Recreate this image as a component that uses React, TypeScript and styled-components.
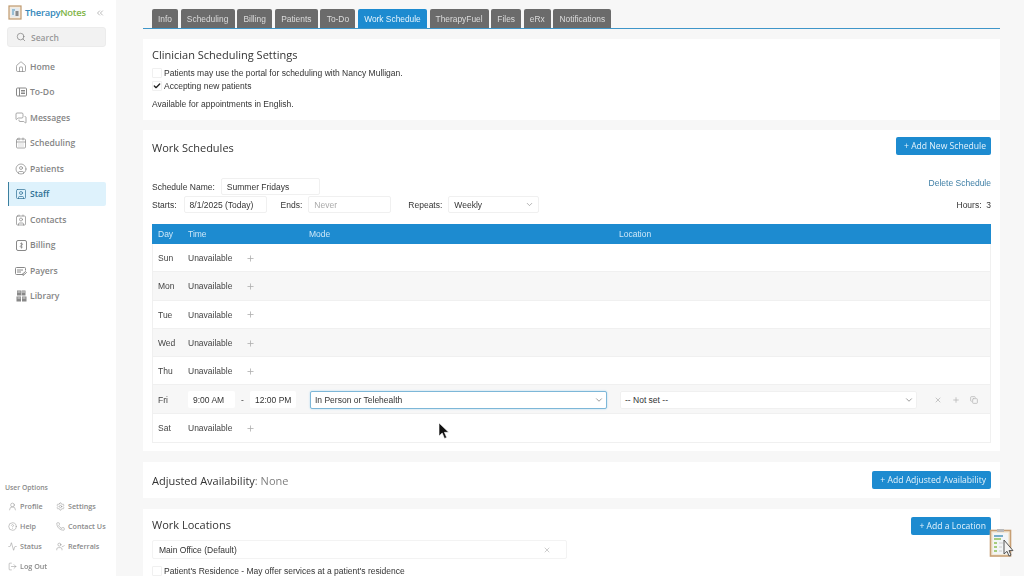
import * as React from "react";
import styled, { createGlobalStyle } from "styled-components";
import {
  House, MessagesSquare, CalendarDays, CircleUser, SquareUser, Contact, Search,
  ChevronsLeft, ChevronDown, Plus, X, Check, Copy, UserRound, Settings, CircleHelp,
  Phone, Activity, UserCheck, LogOut,
} from "lucide-react";

const GlobalStyle = createGlobalStyle`
  html, body { margin: 0; padding: 0; height: 100%; overflow: hidden; }
  body { font-family: "Liberation Sans", Arial, sans-serif; color: #2b2b2b; background: #f7f7f7; }
`;

const Page = styled.div`
  display: flex;
  width: 1024px;
  height: 576px;
  overflow: hidden;
  position: relative;
  filter: blur(0.35px);
`;

/* sidebar */
const Sidebar = styled.aside`
  width: 116px;
  flex: none;
  height: 576px;
  background: #fff;
  display: flex;
  flex-direction: column;
  font-family: "Open Sans", sans-serif;
  color: #777;
`;
const LogoRow = styled.div`
  display: flex;
  align-items: center;
  height: 27px;
  padding: 0 0 2px 8px;
  box-sizing: border-box;
`;
const LogoText = styled.span`
  font-size: 9.4px;
  font-weight: 600;
  letter-spacing: -0.25px;
  margin-left: 3px;
  color: #3488bb;
  b { font-weight: 600; color: #7fb446; }
`;
const Collapse = styled.span`
  margin-left: 9px;
  display: flex;
  color: #888;
`;
const SearchBox = styled.div`
  margin-left: 7px;
  width: 99px;
  height: 20px;
  box-sizing: border-box;
  background: #f2f2f2;
  border-radius: 3px;
  border: 1px solid #ececec;
  display: flex;
  align-items: center;
  gap: 5px;
  padding-left: 8px;
  font-size: 8.5px;
  font-weight: 600;
  color: #999;
`;
const Nav = styled.nav`
  margin-top: 7.5px;
  display: flex;
  flex-direction: column;
  gap: 1.5px;
`;
const NavItem = styled.div<{ $active?: boolean }>`
  height: 24px;
  width: 98px;
  margin-left: 8px;
  box-sizing: border-box;
  display: flex;
  align-items: center;
  gap: 3px;
  padding-left: 6px;
  font-size: 8.6px;
  font-weight: 600;
  border-left: 1px solid ${p => (p.$active ? "#3b7f9f" : "transparent")};
  background: ${p => (p.$active ? "#def2fc" : "transparent")};
  color: ${p => (p.$active ? "#2d6f93" : "#858585")};
  border-radius: 0 2px 2px 0;
`;
const NavIcon = styled.span`
  width: 12px;
  height: 12px;
  display: flex;
  align-items: center;
  justify-content: center;
  flex: none;
`;
const UserOptions = styled.div`
  margin-top: auto;
  padding: 0 0 0 5px;
  font-size: 6.8px;
  font-weight: 600;
  color: #8a8a8a;
`;
const OptionsTitle = styled.div`
  height: 11px;
  line-height: 11px;
  margin-bottom: 3px;
`;
const OptionsGrid = styled.div`
  display: grid;
  grid-template-columns: 48px 60px;
  grid-auto-rows: 20px;
  padding-left: 3px;
`;
const Option = styled.div`
  display: flex;
  align-items: center;
  gap: 3px;
  font-size: 7.2px;
`;

/* main column */
const Main = styled.main`
  flex: 1;
  min-width: 0;
  padding: 9px 24px 0 27px;
  font-size: 8.5px;
`;
const Tabs = styled.div`
  display: flex;
  gap: 2.6px;
  padding-left: 9px;
  height: 19px;
  border-bottom: 1px solid #3f96c9;
`;
const Tab = styled.div<{ $active?: boolean; $w: number }>`
  width: ${p => p.$w}px;
  box-sizing: border-box;
  display: flex;
  align-items: center;
  justify-content: center;
  font-size: 8.4px;
  border-radius: 2px 2px 0 0;
  background: ${p => (p.$active ? "#1d8bd0" : "#6b6b6b")};
  color: ${p => (p.$active ? "#e6f4fd" : "#dcdcdc")};
`;
const Card = styled.section<{ $h: number; $mt: number }>`
  background: #fff;
  height: ${p => p.$h}px;
  margin-top: ${p => p.$mt}px;
  box-sizing: border-box;
  padding: 0 9px;
  overflow: hidden;
`;
const CardHead = styled.div<{ $h: number; $pt?: number }>`
  display: flex;
  align-items: center;
  justify-content: space-between;
  box-sizing: border-box;
  height: ${p => p.$h}px;
  padding-top: ${p => p.$pt ?? 0}px;
`;
const Title = styled.h2<{ $mt?: number }>`
  margin: ${p => p.$mt ?? 0}px 0 0;
  font-family: "Open Sans", sans-serif;
  font-weight: 400;
  font-size: 11px;
  color: #333;
  span { color: #808080; }
`;
const BlueButton = styled.button<{ $mt?: number }>`
  height: 18px;
  margin-top: ${p => p.$mt ?? 0}px;
  border: 0;
  border-radius: 2px;
  background: #1d8bd0;
  color: #e4f3fc;
  padding: 0 5px 0 8px;
  font-family: "Open Sans", sans-serif;
  font-size: 8.6px;
  white-space: nowrap;
`;
const CheckRow = styled.div<{ $mt?: number }>`
  display: flex;
  align-items: center;
  height: 12.5px;
  margin-top: ${p => p.$mt ?? 0}px;
  gap: 2px;
  color: #333;
`;
const CheckBox = styled.span`
  width: 8px;
  height: 8px;
  flex: none;
  display: flex;
  align-items: center;
  justify-content: center;
  border: 1px solid #f0f0f0;
  border-radius: 1px;
  color: #222;
`;
const Note = styled.div`
  margin-top: 6px;
  color: #333;
  height: 12px;
  line-height: 12px;
`;
const FormRow = styled.div<{ $mt: number }>`
  display: flex;
  align-items: center;
  height: 17px;
  margin-top: ${p => p.$mt}px;
  color: #333;
`;
const FieldLabel = styled.span<{ $ml: number }>`
  margin-left: ${p => p.$ml}px;
`;
const Field = styled.div<{ $w: number; $ml: number; $muted?: boolean }>`
  width: ${p => p.$w}px;
  height: 17px;
  margin-left: ${p => p.$ml}px;
  box-sizing: border-box;
  border: 1px solid #f0f0f0;
  border-radius: 2px;
  display: flex;
  align-items: center;
  justify-content: space-between;
  padding: 0 4px 0 5px;
  background: #fff;
  color: ${p => (p.$muted ? "#aaa" : "#333")};
`;
const EndText = styled.div<{ $link?: boolean }>`
  margin-left: auto;
  margin-bottom: ${p => (p.$link ? 8 : 0)}px;
  color: ${p => (p.$link ? "#3f7fa6" : "#333")};
`;
const TableHead = styled.div`
  display: grid;
  grid-template-columns: 30px 121px 310px 1fr;
  align-items: center;
  height: 20px;
  margin-top: 11px;
  padding-left: 6px;
  background: #1d8bd0;
  color: #cfe8f8;
`;
const Rows = styled.div`
  border: 1px solid #f0f0f0;
  border-top: 0;
`;
const Row = styled.div<{ $shade?: boolean }>`
  display: flex;
  align-items: center;
  height: 28.3px;
  box-sizing: border-box;
  padding: 1px 0 0 5px;
  border-bottom: 1px solid #f0f0f0;
  background: ${p => (p.$shade ? "#f7f7f7" : "#fff")};
  color: #444;
  &:last-child { border-bottom: 0; }
`;
const DayCell = styled.div`
  width: 30px;
  flex: none;
`;
const AddIcon = styled.span`
  margin-left: 13.5px;
  display: flex;
  color: #b0b0b0;
`;
const TimeBox = styled.div<{ $w: number }>`
  width: ${p => p.$w}px;
  height: 17px;
  box-sizing: border-box;
  padding-left: 5px;
  background: #fff;
  border-radius: 2px;
  display: flex;
  align-items: center;
  color: #333;
`;
const Dash = styled.span`
  width: 15px;
  text-align: center;
`;
const SelectBox = styled.div<{ $w: number; $ml: number; $focus?: boolean }>`
  width: ${p => p.$w}px;
  height: 18px;
  margin-left: ${p => p.$ml}px;
  box-sizing: border-box;
  background: #fff;
  border: 1px solid ${p => (p.$focus ? "#7db7d8" : "#f0f0f0")};
  box-shadow: ${p => (p.$focus ? "0 0 2px #a9d6ef" : "none")};
  border-radius: 2px;
  display: flex;
  align-items: center;
  justify-content: space-between;
  padding: 0 2px 0 4px;
  color: #333;
`;
const RowTools = styled.div`
  display: flex;
  align-items: center;
  gap: 10px;
  margin-left: 17px;
  color: #b8b8b8;
`;
const LocationRow = styled.div`
  width: 415px;
  height: 19px;
  box-sizing: border-box;
  border: 1px solid #f3f3f3;
  border-radius: 2px;
  display: flex;
  align-items: center;
  justify-content: space-between;
  padding: 0 15px 0 6px;
  color: #333;
`;
const Cursor = styled.svg`
  position: absolute;
  left: 438px;
  top: 422px;
`;
const ClipWrap = styled.div`
  position: absolute;
  left: 989px;
  top: 529px;
`;

const Logo = () => (
  <svg width="14" height="15" viewBox="0 0 14 15">
    <rect x="1" y="1" width="12" height="13" fill="#f3ece0" stroke="#c09a6e" strokeWidth="1.2" />
    <rect x="3" y="3" width="8" height="9" fill="#e6ebef" />
    <path d="M4 5h3M4 7h2M4 9h2" stroke="#4d93bb" strokeWidth="1" />
    <rect x="7.5" y="6" width="3" height="5" fill="#8a8a8a" />
  </svg>
);

const TodoIcon = () => (
  <svg width="11" height="10" viewBox="0 0 11 10" fill="none" stroke="#888" strokeWidth="1">
    <rect x=".5" y="1" width="10" height="8" rx="1" />
    <path d="M3.5 1v8M5 3.5h4M5 5h4M5 6.5h4" />
  </svg>
);
const BillingIcon = () => (
  <svg width="11" height="11" viewBox="0 0 11 11" fill="none" stroke="#888" strokeWidth="1">
    <rect x=".5" y=".5" width="10" height="10" rx="1.5" />
    <path d="M5.500 2.500v6M4.200 3.800c1-.8 2.400-.4 2.400.5 0 1.400-2.400.8-2.400 2.200 0 .9 1.500 1.200 2.500.5" strokeWidth=".8" />
  </svg>
);
const PayersIcon = () => (
  <svg width="12" height="10" viewBox="0 0 12 10" fill="none" stroke="#888" strokeWidth="1">
    <path d="M8.500 8.500H1.500a1 1 0 0 1-1-1v-5a1 1 0 0 1 1-1h8a1 1 0 0 1 1 1v2" />
    <path d="M2 4h6M2 6h4M7 8.500l3.500-3 1 1L8 9.500z" />
  </svg>
);
const LibraryIcon = () => (
  <svg width="11" height="12" viewBox="0 0 11 12" fill="#888">
    <rect x="1" y=".5" width="4" height="5" />
    <rect x="5.500" y=".5" width="4" height="5" />
    <rect x=".5" y="6.500" width="4.500" height="5" />
    <rect x="6" y="6.500" width="4.500" height="5" />
    <path d="M1.500 2h3M6 2h3M1.500 8h3M6.500 8h3" stroke="#fff" strokeWidth=".7" />
  </svg>
);

const TinyClipboard = () => (
  <svg width="26" height="28" viewBox="0 0 26 28">
    <rect x="1.500" y="1.500" width="20" height="25.500" fill="#f2ead9" stroke="#c79f74" strokeWidth="1.6" />
    <rect x="4" y="4" width="15" height="21" fill="#f2f5f7" />
    <rect x="8" y="0" width="7" height="3" fill="#b9b9b9" />
    <path d="M5 7h9" stroke="#4d93bb" strokeWidth="1.500" />
    <path d="M5 10h7" stroke="#8fbf56" strokeWidth="1.500" />
    <path d="M5 14h3M5 18h3M5 22h3" stroke="#8fbf56" strokeWidth="1.400" />
    <path d="M10 14h4M10 18h3M10 22h3" stroke="#ccc" strokeWidth="1" />
    <path d="M15 11v14l3-2.700 2 4.700 2-.9-2-4.500h4z" fill="#f4f4f4" stroke="#555" strokeWidth="1" />
  </svg>
);

const icon = { size: 12, strokeWidth: 1.4 };
const navItems: { label: string; node: React.ReactNode; active?: boolean }[] = [
  { label: "Home", node: <House {...icon} /> },
  { label: "To-Do", node: <TodoIcon /> },
  { label: "Messages", node: <MessagesSquare {...icon} /> },
  { label: "Scheduling", node: <CalendarDays {...icon} /> },
  { label: "Patients", node: <CircleUser {...icon} /> },
  { label: "Staff", node: <SquareUser {...icon} />, active: true },
  { label: "Contacts", node: <Contact {...icon} /> },
  { label: "Billing", node: <BillingIcon /> },
  { label: "Payers", node: <PayersIcon /> },
  { label: "Library", node: <LibraryIcon /> },
];

const small = { size: 9, strokeWidth: 1.3 };
const options: { label: string; node: React.ReactNode }[] = [
  { label: "Profile", node: <UserRound {...small} /> },
  { label: "Settings", node: <Settings {...small} /> },
  { label: "Help", node: <CircleHelp {...small} /> },
  { label: "Contact Us", node: <Phone {...small} /> },
  { label: "Status", node: <Activity {...small} /> },
  { label: "Referrals", node: <UserCheck {...small} /> },
  { label: "Log Out", node: <LogOut {...small} /> },
];

const tabs: [string, number][] = [
  ["Info", 26], ["Scheduling", 54], ["Billing", 35], ["Patients", 43], ["To-Do", 35],
  ["Work Schedule", 69], ["TherapyFuel", 59], ["Files", 30], ["eRx", 27], ["Notifications", 58],
];

const Unavailable = ({ day, shade }: { day: string; shade?: boolean }) => (
  <Row $shade={shade}>
    <DayCell>{day}</DayCell>
    <span>Unavailable</span>
    <AddIcon><Plus size={9} strokeWidth={2.2} /></AddIcon>
  </Row>
);

export default function App() {
  return (
    <Page>
      <GlobalStyle />
      <Sidebar>
        <LogoRow>
          <Logo />
          <LogoText>Therapy<b>Notes</b></LogoText>
          <Collapse><ChevronsLeft size={10} strokeWidth={1.4} /></Collapse>
        </LogoRow>
        <SearchBox><Search size={10} strokeWidth={1.6} color="#777" />Search</SearchBox>
        <Nav>
          {navItems.map(n => (
            <NavItem key={n.label} $active={n.active}>
              <NavIcon>{n.node}</NavIcon>
              {n.label}
            </NavItem>
          ))}
        </Nav>
        <UserOptions>
          <OptionsTitle>User Options</OptionsTitle>
          <OptionsGrid>
            {options.map(o => (
              <Option key={o.label}>{o.node}{o.label}</Option>
            ))}
          </OptionsGrid>
        </UserOptions>
      </Sidebar>

      <Main>
        <Tabs>
          {tabs.map(([t, w]) => (
            <Tab key={t} $w={w} $active={t === "Work Schedule"}>{t}</Tab>
          ))}
        </Tabs>

        <Card $h={81} $mt={10}>
          <CardHead $h={28} $pt={2}><Title>Clinician Scheduling Settings</Title></CardHead>
          <CheckRow><CheckBox />Patients may use the portal for scheduling with Nancy Mulligan.</CheckRow>
          <CheckRow><CheckBox><Check size={8} strokeWidth={4} /></CheckBox>Accepting new patients</CheckRow>
          <Note>Available for appointments in English.</Note>
        </Card>

        <Card $h={321} $mt={10}>
          <CardHead $h={32}>
            <Title $mt={2}>Work Schedules</Title>
            <BlueButton>+ Add New Schedule</BlueButton>
          </CardHead>
          <FormRow $mt={16}>
            Schedule Name:
            <Field $w={99} $ml={6}>Summer Fridays</Field>
            <EndText $link>Delete Schedule</EndText>
          </FormRow>
          <FormRow $mt={1}>
            Starts:
            <Field $w={83} $ml={7}>8/1/2025 (Today)</Field>
            <FieldLabel $ml={14}>Ends:</FieldLabel>
            <Field $w={83} $ml={6} $muted>Never</Field>
            <FieldLabel $ml={17}>Repeats:</FieldLabel>
            <Field $w={91} $ml={6}>Weekly<ChevronDown size={9} color="#999" /></Field>
            <EndText>Hours:&nbsp;&nbsp;3</EndText>
          </FormRow>
          <TableHead>
            <span>Day</span><span>Time</span><span>Mode</span><span>Location</span>
          </TableHead>
          <Rows>
            <Unavailable day="Sun" />
            <Unavailable day="Mon" shade />
            <Unavailable day="Tue" />
            <Unavailable day="Wed" shade />
            <Unavailable day="Thu" />
            <Row $shade>
              <DayCell>Fri</DayCell>
              <TimeBox $w={47}>9:00 AM</TimeBox>
              <Dash>-</Dash>
              <TimeBox $w={46}>12:00 PM</TimeBox>
              <SelectBox $w={297} $ml={14} $focus>In Person or Telehealth<ChevronDown size={10} color="#888" /></SelectBox>
              <SelectBox $w={297} $ml={13}>-- Not set --<ChevronDown size={10} color="#888" /></SelectBox>
              <RowTools>
                <X size={8} strokeWidth={2.4} />
                <Plus size={8} strokeWidth={2.4} />
                <Copy size={8} strokeWidth={2.4} />
              </RowTools>
            </Row>
            <Unavailable day="Sat" />
          </Rows>
        </Card>

        <Card $h={36} $mt={11}>
          <CardHead $h={36}>
            <Title>Adjusted Availability<span>: None</span></Title>
            <BlueButton>+ Add Adjusted Availability</BlueButton>
          </CardHead>
        </Card>

        <Card $h={80} $mt={11}>
          <CardHead $h={31}>
            <Title>Work Locations</Title>
            <BlueButton $mt={2}>+ Add a Location</BlueButton>
          </CardHead>
          <LocationRow>
            Main Office (Default)
            <X size={8} strokeWidth={2.2} color="#bbb" />
          </LocationRow>
          <CheckRow $mt={6}><CheckBox />Patient's Residence - May offer services at a patient's residence</CheckRow>
        </Card>
      </Main>

      <Cursor width="12" height="18" viewBox="0 0 12 18">
        <path d="M1 1v13l3.200-3 2.300 5.500 2.200-1-2.300-5.200h4.300z" fill="#111" stroke="#fff" strokeWidth=".6" />
      </Cursor>
      <ClipWrap><TinyClipboard /></ClipWrap>
    </Page>
  );
}
